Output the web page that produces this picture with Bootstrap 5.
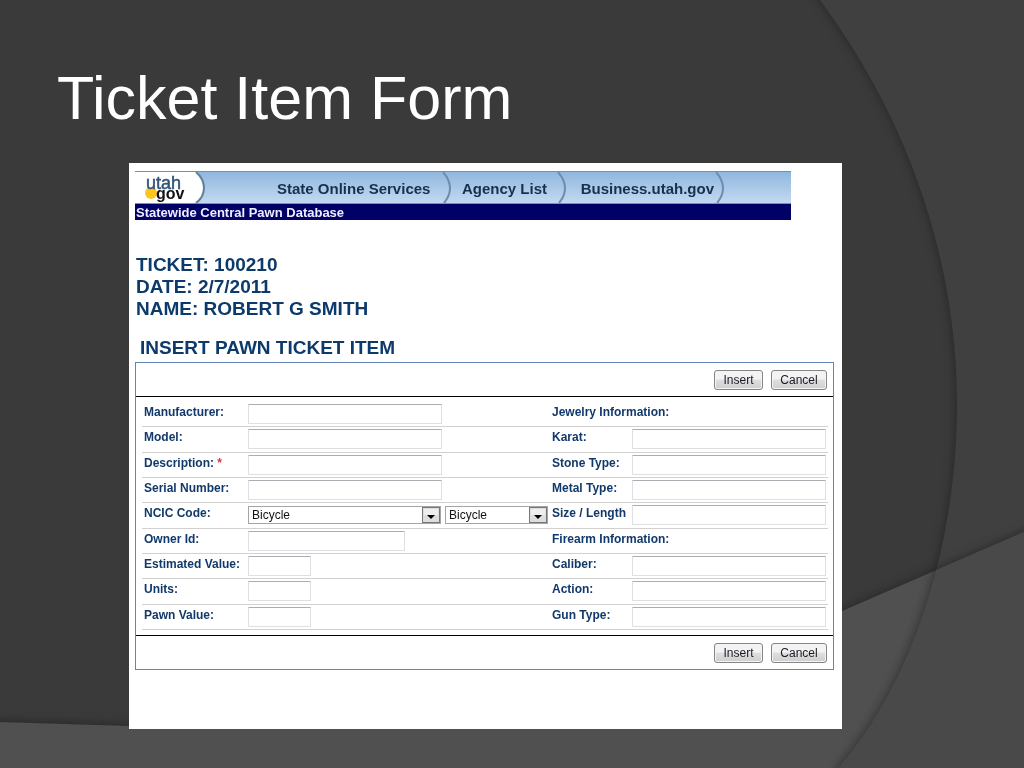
<!DOCTYPE html>
<html lang="en">
<head>
<meta charset="utf-8">
<meta name="viewport" content="width=device-width, initial-scale=1">
<title>Ticket Item Form</title>
<link href="https://cdn.jsdelivr.net/npm/bootstrap@5.3.0/dist/css/bootstrap.min.css" rel="stylesheet">
<style>
  body { background: #3a3a3a; font-family: "Liberation Sans", Arial, sans-serif; font-size: 12px; line-height: 20px; color: #12396b; }
  .backdrop { z-index: -1; }
  .slide { padding: 64px 182px 39px 129px; }
  .slide-title { font-size: 61px; line-height: 69px; margin: 0 0 30px -72px; }
  .sheet { min-height: 566px; padding: 8px 8px 59px 6px; }
  .banner { margin-right: 43px; }
  .strip { height: 33px; background: linear-gradient(#90b7df, #c3d9f0); border-top: 1px solid #7590a8; border-bottom: 1px solid #6f93ba; }
  .strip a { font-size: 15px; line-height: 34px; font-weight: bold; color: #17304f; text-decoration: none; }
  .brand { width: 72px; }
  .lead-gap { width: 70px; }
  .nav-state { width: 164px; } .nav-agency { width: 103px; } .nav-business { width: 146px; }
  .arc { width: 12px; height: 31px; }
  .app-name { background: #000066; color: #eef; font-size: 13px; line-height: 17px; height: 16px; padding-left: 1px; }
  .ticket { font-size: 19px; line-height: 22px; font-weight: bold; color: #0c3a6b; margin: 34px 0 17px 1px; }
  .form-title { font-size: 19px; line-height: 22px; font-weight: bold; color: #0c3a6b; margin: 0 0 3px 5px; }
  .item-form { border: 1px solid #6484b8; }
  .bar { height: 33px; padding-right: 6px; gap: 8px; }
  .fields { border-top: 1px solid #000; border-bottom: 1px solid #000; padding: 5px 5px 5px 6px; }
  .rows { height: 228px; }
  .line { display: grid; grid-template-columns: 104px minmax(0, 1fr) 80px 194px; padding: 0 2px; border-bottom: 1px solid #d3d1cf; flex: 1 1 0; min-height: 0; }
  .line label, .line .group { font-weight: bold; white-space: nowrap; line-height: 20px; height: 20px; }
  .line .form-control { height: 20px; margin-top: 2px; padding: 0 3px; font-size: 11px; border: 1px solid #dcdfe4; border-top-color: #abadb3; border-radius: 1px; }
  .w-long { width: 194px; } .w-mid { width: 157px; } .w-short { width: 63px; }
  .line .form-select { height: 18px; margin-top: 3px; padding: 0 20px 0 3px; font-size: 12px; line-height: 16px; color: #111; border: 1px solid #a5a5a5; border-radius: 0;
    background: #fff url("data:image/svg+xml,%3Csvg xmlns='http://www.w3.org/2000/svg' width='18' height='16'%3E%3Crect x='.5' y='.5' width='17' height='15' fill='%23dedede' stroke='%23777'/%3E%3Cpath d='M2 2h14v6H2z' fill='%23eee'/%3E%3Cpath d='M5 8h8l-4 4z' fill='%23000'/%3E%3C/svg%3E") no-repeat right center / 18px 16px; }
  .w-code { width: 193px; } .w-sub { width: 103px; }
  .btn-classic { height: 20px; padding: 0; font-size: 12px; line-height: 18px; color: #1b1b26; background: linear-gradient(#f3f3f3 0 45%, #dedede 50%, #cfcfcf); border: 1px solid #858585; border-radius: 3px; box-shadow: inset 0 0 0 1px #f4f4f4; }
  .w-insert { width: 49px; } .w-cancel { width: 56px; }
  .bar .btn-classic:hover { border-color: #3c7fb1; color: #000; }
</style>
</head>
<body>
<svg class="backdrop position-fixed top-0 start-0 w-100 h-100" viewBox="0 0 1024 768" preserveAspectRatio="none" aria-hidden="true">
  <defs>
    <filter id="soft" x="-10%" y="-10%" width="120%" height="120%" color-interpolation-filters="sRGB"><feDropShadow dx="-2" dy="0" stdDeviation="4" flood-color="#202020" flood-opacity=".6"/></filter>
    <filter id="rise" x="-10%" y="-20%" width="120%" height="140%" color-interpolation-filters="sRGB"><feDropShadow dx="0" dy="-2" stdDeviation="4" flood-color="#202020" flood-opacity=".6"/></filter>
    <path id="side" d="M820 0C912 125 957 265 957 405C957 540 915 680 838 768V900H1100V-60H780Z"/>
    <path id="floor" d="M-20 721L0 722L129 726C400 733 640 695 842 611L1024 532L1100 499V850H-20Z"/>
    <clipPath id="floorClip"><use href="#floor"/></clipPath>
  </defs>
  <rect width="1024" height="768" fill="#3a3a3a"/>
  <use href="#side" fill="#404040" filter="url(#soft)"/>
  <use href="#floor" fill="#505050" filter="url(#rise)"/>
  <g clip-path="url(#floorClip)"><use href="#side" fill="#494949" filter="url(#soft)" opacity=".9"/></g>
</svg>

<main class="slide">
  <h1 class="slide-title text-white fw-normal text-nowrap">Ticket Item Form</h1>
  <section class="sheet bg-white">
    <header class="banner">
      <nav class="strip d-flex">
        <a class="brand d-block" href="#" aria-label="utah gov">
          <svg width="72" height="31" viewBox="0 0 72 31" class="d-block" aria-hidden="true">
            <path d="M0 0H61Q68 7 68 16T61 31H0Z" fill="#fff"/>
            <path d="M61 0Q69 7 69 16T61 31" fill="none" stroke="#647f98" stroke-width="2"/>
            <circle cx="16" cy="21" r="6" fill="#fdc51d"/>
            <text x="11" y="17" font-family="Liberation Sans, sans-serif" font-size="18" font-weight="400" fill="#315477" stroke="#315477" stroke-width=".5">utah</text>
            <text x="21" y="27" font-family="Liberation Sans, sans-serif" font-size="16" font-weight="700" fill="#111">gov</text>
          </svg>
        </a>
        <span class="lead-gap"></span>
        <a href="#" class="nav-state flex-shrink-0 text-nowrap">State Online Services</a>
        <svg class="arc" viewBox="0 0 12 31"><path d="M2 0Q9 8 9 16T3 31" fill="none" stroke="#6c8daf" stroke-width="2"/></svg>
        <a href="#" class="nav-agency flex-shrink-0 text-nowrap text-center">Agency List</a>
        <svg class="arc" viewBox="0 0 12 31"><path d="M2 0Q9 8 9 16T3 31" fill="none" stroke="#6c8daf" stroke-width="2"/></svg>
        <a href="#" class="nav-business flex-shrink-0 text-nowrap text-end">Business.utah.gov</a>
        <svg class="arc" viewBox="0 0 12 31"><path d="M2 0Q9 8 9 16T3 31" fill="none" stroke="#6c8daf" stroke-width="2"/></svg>
      </nav>
      <div class="app-name fw-bold">Statewide Central Pawn Database</div>
    </header>

    <div class="ticket">
      <div>TICKET: 100210</div>
      <div>DATE: 2/7/2011</div>
      <div>NAME: ROBERT G SMITH</div>
    </div>
    <h2 class="form-title">INSERT PAWN TICKET ITEM</h2>

    <form class="item-form">
      <div class="bar d-flex justify-content-end align-items-center">
        <button type="button" class="btn btn-classic w-insert">Insert</button>
        <button type="button" class="btn btn-classic w-cancel">Cancel</button>
      </div>
      <div class="fields">
        <div class="rows d-flex flex-column">
          <div class="line"><label for="maker">Manufacturer:</label><div><input id="maker" class="form-control w-long"></div><span class="group">Jewelry Information:</span></div>
          <div class="line"><label for="model">Model:</label><div><input id="model" class="form-control w-long"></div><label for="karat">Karat:</label><input id="karat" class="form-control"></div>
          <div class="line"><label for="desc">Description: <span class="text-danger">*</span></label><div><input id="desc" class="form-control w-long"></div><label for="stone">Stone Type:</label><input id="stone" class="form-control"></div>
          <div class="line"><label for="serial">Serial Number:</label><div><input id="serial" class="form-control w-long"></div><label for="metal">Metal Type:</label><input id="metal" class="form-control"></div>
          <div class="line"><label for="ncic">NCIC Code:</label>
            <div class="d-flex gap-1"><select id="ncic" class="form-select w-code"><option>Bicycle</option></select><select class="form-select w-sub" aria-label="NCIC sub code"><option>Bicycle</option></select></div>
            <label for="size">Size / Length</label><input id="size" class="form-control"></div>
          <div class="line"><label for="owner">Owner Id:</label><div><input id="owner" class="form-control w-mid"></div><span class="group">Firearm Information:</span></div>
          <div class="line"><label for="est">Estimated Value:</label><div><input id="est" class="form-control w-short"></div><label for="caliber">Caliber:</label><input id="caliber" class="form-control"></div>
          <div class="line"><label for="units">Units:</label><div><input id="units" class="form-control w-short"></div><label for="action">Action:</label><input id="action" class="form-control"></div>
          <div class="line"><label for="pawn">Pawn Value:</label><div><input id="pawn" class="form-control w-short"></div><label for="gun">Gun Type:</label><input id="gun" class="form-control"></div>
        </div>
      </div>
      <div class="bar d-flex justify-content-end align-items-center">
        <button type="button" class="btn btn-classic w-insert">Insert</button>
        <button type="button" class="btn btn-classic w-cancel">Cancel</button>
      </div>
    </form>
  </section>
</main>
<script src="https://cdn.jsdelivr.net/npm/bootstrap@5.3.0/dist/js/bootstrap.bundle.min.js"></script>
</body>
</html>
